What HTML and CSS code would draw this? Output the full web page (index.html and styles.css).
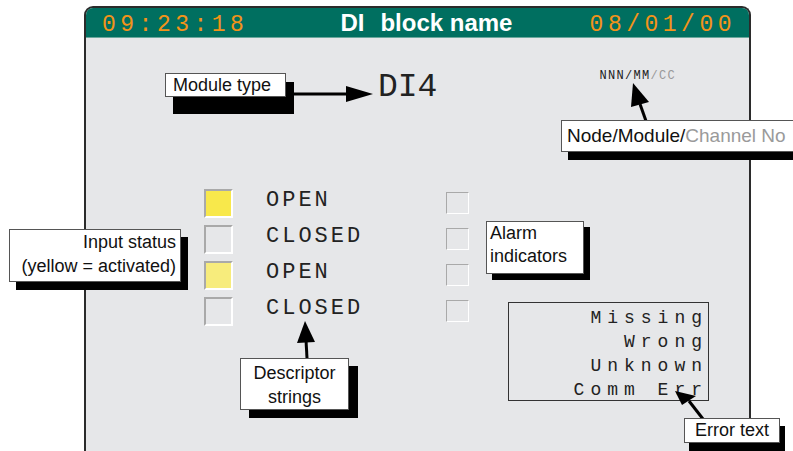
FILE: index.html
```html
<!DOCTYPE html>
<html lang="en">
<head>
    <meta charset="UTF-8">
    <meta name="viewport" content="width=device-width, initial-scale=1.0">
    <title>DI block name</title>
    <link rel="stylesheet" href="styles.css">
</head>
<body>
    <div class="screen">
        <div class="titlebar">
            <span class="clock">09:23:18</span>
            <span class="title">DI<span class="name">block name</span></span>
            <span class="clock date">08/01/00</span>
        </div>
        <div class="panel">
            <div class="module">
                <span class="module-type">DI4</span>
                <span class="address">NNN/MM<span class="chan">/CC</span></span>
            </div>
            <div class="lower">
                <div class="rows">
                    <div class="status on"></div>
                    <div class="desc">OPEN</div>
                    <div class="alarm"></div>

                    <div class="status"></div>
                    <div class="desc">CLOSED</div>
                    <div class="alarm"></div>

                    <div class="status half"></div>
                    <div class="desc">OPEN</div>
                    <div class="alarm"></div>

                    <div class="status"></div>
                    <div class="desc">CLOSED</div>
                    <div class="alarm"></div>
                </div>
                <div class="errors">
                    <div>Missing</div>
                    <div>Wrong</div>
                    <div>Unknown</div>
                    <div>Comm Err</div>
                </div>
            </div>
        </div>
    </div>

    <!-- annotation arrows -->
    <svg class="arrows" width="793" height="451" viewBox="0 0 793 451">
        <line x1="286" y1="94" x2="350" y2="94" />
        <polygon points="346,86 373,94 346,102" />
        <line x1="640" y1="104" x2="646" y2="121" />
        <polygon points="633,83 631,107 649,102" />
        <line x1="306" y1="340" x2="307" y2="358" />
        <polygon points="305,321 297,343 315,342" />
        <line x1="689" y1="401" x2="703" y2="419" />
        <polygon points="675,391 682,405 696,396" />
    </svg>

    <div class="callout module-note">Module type</div>
    <div class="callout node-note">Node/Module/<span class="grey">Channel No</span></div>
    <div class="callout input-note">Input status<br>(yellow = activated)</div>
    <div class="callout alarm-note">Alarm<br>indicators</div>
    <div class="callout desc-note">Descriptor<br>strings</div>
    <div class="callout error-note">Error text</div>
</body>
</html>
```

FILE: styles.css
```css
body {
    margin: 0;
    width: 793px;
    height: 451px;
    overflow: hidden;
    position: relative;
    background: #fff;
    font-family: "Liberation Sans", Arial, sans-serif;
}
.screen {
    margin: 6px 0 0 84px;
    width: 663px;
    height: 460px;
    border: 2px solid #2b2b2b;
    border-bottom: none;
    border-radius: 9px 9px 0 0;
    background: #e6e7e9;
    overflow: hidden;
}
.titlebar {
    height: 29px;
    background: #006f60;
    border-bottom: 1px solid #6aa79c;
    display: flex;
    align-items: baseline;
    padding: 0 13px 0 16px;
    line-height: 29px;
}
.clock {
    font-family: "Liberation Mono", monospace;
    font-size: 23px;
    letter-spacing: 4.5px;
    color: #f39319;
}
.date {
    margin-left: auto;
}
.title {
    margin-left: 92px;
    font-size: 24px;
    font-weight: bold;
    color: #fff;
}
.title .name {
    margin-left: 16px;
}
.panel {
    padding-top: 27px;
}
.module {
    display: flex;
    align-items: flex-start;
    height: 122px;
}
.module-type {
    margin-left: 292px;
    margin-top: 4px;
    font-family: "Liberation Mono", monospace;
    font-size: 33px;
    line-height: 38px;
    color: #222;
}
.address {
    margin: 4px 0 0 162px;
    font-family: "Liberation Mono", monospace;
    font-size: 12px;
    letter-spacing: 1.3px;
    color: #222;
}
.address .chan {
    color: #999;
}
.lower {
    display: flex;
    align-items: flex-start;
    margin-left: 118px;
}
.rows {
    display: grid;
    grid-template-columns: 29px 147px 24px;
    grid-auto-rows: 36px;
    column-gap: 33px;
    align-items: center;
}
.status {
    width: 25px;
    height: 25px;
    border: 2px solid;
    border-color: #a9a9a9 #fff #fff #a9a9a9;
    margin-top: -3px;
}
.status.on {
    background: #f8e84b;
}
.status.half {
    background: #f7ec7c;
}
.alarm {
    width: 21px;
    height: 20px;
    border: 1.5px solid;
    border-color: #a9a9a9 #fff #fff #a9a9a9;
    margin-top: -4px;
}
.desc {
    font-family: "Liberation Mono", monospace;
    font-size: 22px;
    letter-spacing: 3px;
    color: #222;
    margin-top: -9px;
}
.errors {
    margin: 115px 0 0 38px;
    width: 199px;
    height: 94px;
    padding-top: 3px;
    border: 1px solid #333;
    text-align: right;
    font-family: "Liberation Mono", monospace;
    font-size: 18px;
    line-height: 24px;
    letter-spacing: 6px;
    color: #222;
}
.arrows {
    position: absolute;
    left: 0;
    top: 0;
    pointer-events: none;
}
.arrows line {
    stroke: #000;
    stroke-width: 3;
}
.arrows polygon {
    fill: #000;
}
.callout {
    position: absolute;
    box-sizing: border-box;
    background: #fff;
    border: 1px solid #555;
    box-shadow: 7px 8px 0 #000;
    font-size: 18px;
    line-height: 24px;
    color: #111;
}
.module-note {
    left: 165px;
    top: 73px;
    width: 121px;
    height: 24px;
    padding-left: 7px;
    line-height: 22px;
    box-shadow: 8px 9px 0 #000, 8px 17px 0 #000;
}
.node-note {
    left: 561px;
    top: 120px;
    width: 245px;
    height: 32px;
    padding-left: 5px;
    line-height: 30px;
    font-size: 19px;
}
.node-note .grey {
    color: #9a9a9a;
}
.input-note {
    left: 9px;
    top: 229px;
    width: 172px;
    height: 53px;
    padding: 0 4px 0 0;
    text-align: right;
}
.alarm-note {
    left: 486px;
    top: 221px;
    width: 98px;
    height: 53px;
    padding: 0 0 0 3px;
    line-height: 23px;
    box-shadow: 6px 6px 0 #000;
}
.desc-note {
    left: 240px;
    top: 358px;
    width: 109px;
    height: 52px;
    padding-top: 2px;
    text-align: center;
    box-shadow: 9px 8px 0 #000;
}
.error-note {
    left: 684px;
    top: 418px;
    width: 96px;
    height: 25px;
    line-height: 23px;
    text-align: center;
    box-shadow: 5px 8px 0 #000;
}
```
